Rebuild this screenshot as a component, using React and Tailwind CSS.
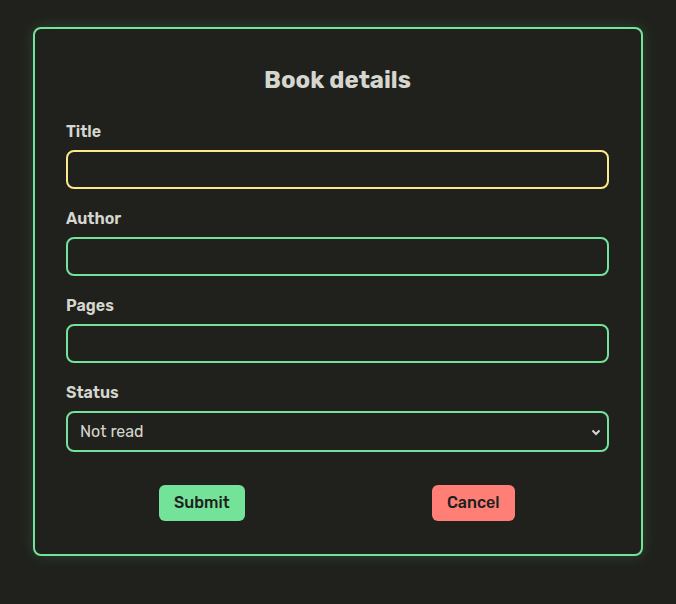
import { useState } from 'react';

const font = { fontFamily: '"Rubik", "Inter", "Noto Sans", sans-serif' };

function Field({ label, children }) {
  return (
    <div className="mb-[17px]">
      <label className="block text-[16px] leading-6 font-semibold text-[#d6d6d0] pt-px mb-[6px]">{label}</label>
      {children}
    </div>
  );
}

export default function App() {
  const [title, setTitle] = useState('');
  const [author, setAuthor] = useState('');
  const [pages, setPages] = useState('');
  const [status, setStatus] = useState('Not read');

  const inputCls =
    'block w-full h-[39px] rounded-lg border-2 border-[#74e39a] bg-[#20211c] px-3 text-[16px] text-[#d6d6d0] outline-none';

  return (
    <div className="min-h-[604px] bg-[#20211c] pt-[27px]" style={font}>
      <form
        className="mx-auto w-[610px] rounded-lg border-2 border-[#74e39a] bg-[#20211c] pl-[31px] pr-8 pt-[35px] pb-[33px] shadow-[0_0_14px_rgba(116,227,154,0.18)]"
        onSubmit={(e) => e.preventDefault()}
      >
        <h2 className="text-center text-[24px] leading-8 font-bold text-[#d6d6d0] mb-[23px]">Book details</h2>

        <Field label="Title">
          <input
            autoFocus
            className={inputCls + ' !border-[#fbe98a]'}
            value={title}
            onChange={(e) => setTitle(e.target.value)}
          />
        </Field>
        <Field label="Author">
          <input className={inputCls} value={author} onChange={(e) => setAuthor(e.target.value)} />
        </Field>
        <Field label="Pages">
          <input className={inputCls} value={pages} onChange={(e) => setPages(e.target.value)} />
        </Field>
        <Field label="Status">
          <div className="relative">
            <select
              className={inputCls + ' !h-[41px] appearance-none'}
              value={status}
              onChange={(e) => setStatus(e.target.value)}
            >
              <option>Not read</option>
              <option>Reading</option>
              <option>Read</option>
            </select>
            <svg
              className="pointer-events-none absolute right-[8px] top-1/2 -translate-y-1/2"
              width="10"
              height="10"
              viewBox="0 0 10 10"
              fill="none"
              stroke="#d6d6d0"
              strokeWidth="2"
            >
              <path d="M1.5 3.5 5 7l3.5-3.5" />
            </svg>
          </div>
        </Field>

        <div className="flex pt-4">
          <div className="flex flex-1 justify-center">
            <button type="submit" className="h-9 rounded-md bg-[#74e39a] px-[15px] text-[16px] font-medium text-[#20211c]">
              Submit
            </button>
          </div>
          <div className="flex flex-1 justify-center">
            <button type="button" className="h-9 rounded-md bg-[#ff7f77] px-[15px] text-[16px] font-medium text-[#20211c]">
              Cancel
            </button>
          </div>
        </div>
      </form>
    </div>
  );
}
